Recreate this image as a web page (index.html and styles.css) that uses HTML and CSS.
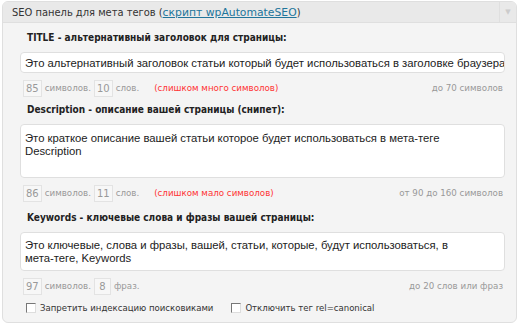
FILE: index.html
```html
<!DOCTYPE html>
<html lang="ru">
<head>
    <meta charset="UTF-8">
    <title>SEO панель</title>
    <link rel="stylesheet" href="styles.css">
</head>
<body>
    <div class="postbox">
        <div class="hndle">
            <span class="hndle-title">SEO панель для мета тегов (<a href="#">скрипт wpAutomateSEO</a>)</span>
            <span class="toggle">▼</span>
        </div>
        <div class="inside">
            <div class="field">
                <label class="field-label">TITLE - альтернативный заголовок для страницы:</label>
                <div class="input single">Это альтернативный заголовок статьи который будет использоваться в заголовке браузера</div>
                <div class="counter">
                    <span class="num">85</span> символов. <span class="num">10</span> слов.
                    <span class="warn">(слишком много символов)</span>
                    <span class="hint">до 70 символов</span>
                </div>
            </div>
            <div class="field">
                <label class="field-label">Description - описание вашей страницы (снипет):</label>
                <div class="input area area-desc">Это краткое описание вашей статьи которое будет использоваться в мета-теге Description</div>
                <div class="counter">
                    <span class="num">86</span> символов. <span class="num">11</span> слов.
                    <span class="warn">(слишком мало символов)</span>
                    <span class="hint">от 90 до 160 символов</span>
                </div>
            </div>
            <div class="field">
                <label class="field-label">Keywords - ключевые слова и фразы вашей страницы:</label>
                <div class="input area area-keys">Это ключевые, слова и фразы, вашей, статьи, которые, будут использоваться, в <span class="nobr">мета-теге,</span> Keywords</div>
                <div class="counter">
                    <span class="num">97</span> символов. <span class="num">8</span> фраз.
                    <span class="hint">до 20 слов или фраз</span>
                </div>
            </div>
            <div class="checks">
                <label class="check"><span class="box"></span>Запретить индексацию поисковиками</label>
                <label class="check"><span class="box"></span>Отключить тег rel=canonical</label>
            </div>
        </div>
    </div>
</body>
</html>
```

FILE: styles.css
```css
* {
    margin: 0;
    padding: 0;
    box-sizing: border-box;
}

body {
    background: #ffffff;
    font-family: "DejaVu Sans", Verdana, sans-serif;
    padding: 1px 3px 0 2px;
}

.postbox {
    width: 515px;
    height: 322px;
    background: #f4f4f4;
    border: 1px solid #dfdfdf;
    border-radius: 6px;
    overflow: hidden;
}

.hndle {
    display: flex;
    justify-content: space-between;
    align-items: center;
    height: 21px;
    padding-left: 9px;
    background: #e9e9e9;
    border-bottom: 1px solid #dfdfdf;
    color: #333;
}

.hndle-title {
    font-family: "DejaVu Sans Condensed", "DejaVu Sans", sans-serif;
    font-size: 11px;
}

.hndle a {
    font-family: "DejaVu Sans", sans-serif;
    color: #21759b;
    font-size: 10.8px;
}

.toggle {
    width: 17px;
    height: 21px;
    line-height: 21px;
    text-align: center;
    font-size: 7px;
    color: #ccc;
    border-left: 1px solid #dfdfdf;
}

.inside {
    padding: 9px 11px 0 17px;
}

.field-label {
    display: block;
    font-family: "DejaVu Sans Condensed", "DejaVu Sans", sans-serif;
    font-size: 10px;
    font-weight: bold;
    color: #222;
    padding-left: 7px;
    margin-bottom: 9px;
}

.input {
    background: #fff;
    border: 1px solid #dfdfdf;
    border-radius: 4px;
    font-family: "Liberation Sans", Arial, sans-serif;
    font-size: 11.3px;
    line-height: 13px;
    color: #222;
    padding: 4px 4px;
}

.single {
    height: 21px;
    white-space: nowrap;
    overflow: hidden;
}

.area {
    padding-right: 18px;
}

.area-desc {
    height: 54px;
    padding-top: 7px;
}

.area-keys {
    height: 39px;
    padding-top: 6px;
}

.nobr {
    white-space: nowrap;
}

.counter {
    display: flex;
    align-items: center;
    gap: 3px;
    font-size: 8.7px;
    color: #999;
    padding: 6px 2px 0 3px;
    height: 24px;
    margin-bottom: 7px;
}

.num {
    display: inline-block;
    border: 1px solid #e3e3e3;
    background: #f7f7f7;
    padding: 2px 2px;
    min-width: 17px;
    text-align: center;
    font-size: 10px;
    color: #999;
}

.warn {
    color: #f33;
    margin-left: 12px;
}

.hint {
    margin-left: auto;
}

.field:nth-child(2) .counter {
    margin-bottom: 10px;
}

.checks {
    display: flex;
    gap: 18px;
    font-family: "DejaVu Sans Condensed", "DejaVu Sans", sans-serif;
    font-size: 9.5px;
    color: #333;
    padding-left: 6px;
    margin-top: 3px;
}

.check {
    display: flex;
    align-items: center;
    gap: 4px;
}

.box {
    width: 10px;
    height: 10px;
    border: 1px solid #777;
    border-right-color: #ddd;
    border-bottom-color: #ddd;
    background: #fff;
}
```
